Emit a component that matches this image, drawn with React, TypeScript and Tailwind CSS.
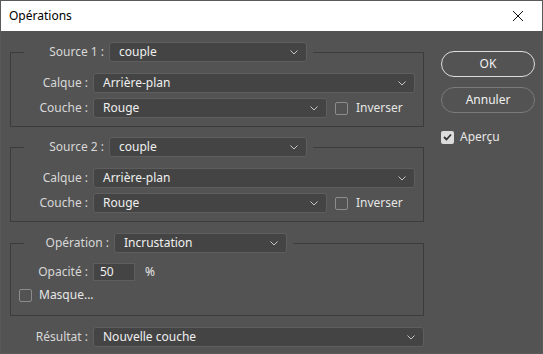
import type { ReactNode } from 'react';

const font = { fontFamily: '"Noto Sans", "Open Sans", sans-serif' };

function Chevron() {
  return (
    <svg width="8" height="5" viewBox="0 0 8 5" className="shrink-0">
      <polyline points="0.5,0.5 4,4 7.5,0.5" fill="none" stroke="#c4c4c4" strokeWidth="1" />
    </svg>
  );
}

function Select({ value, width, height = 20 }: { value: string; width: number; height?: number }) {
  return (
    <div
      className="flex items-center justify-between rounded-[3px] border border-[#5e5e5e] bg-[#444444] pl-[9px] pr-[8px] text-[12px] text-[#f0f0f0]"
      style={{ width, height }}
    >
      <span className="leading-none">{value}</span>
      <Chevron />
    </div>
  );
}

function Checkbox({ checked = false }: { checked?: boolean }) {
  if (checked) {
    return (
      <div className="flex h-[13px] w-[13px] shrink-0 items-center justify-center rounded-[2px] bg-[#dcdcdc]">
        <svg width="9" height="8" viewBox="0 0 9 8">
          <polyline points="1,4 3.5,6.5 8,1.5" fill="none" stroke="#333" strokeWidth="1.8" />
        </svg>
      </div>
    );
  }
  return <div className="h-[13px] w-[13px] shrink-0 rounded-[2px] border border-[#8c8c8c]" />;
}

function Label({ children, width = 77 }: { children: ReactNode; width?: number }) {
  return (
    <span className="shrink-0 text-right text-[12px] text-[#d8d8d8]" style={{ width }}>
      {children}
    </span>
  );
}

function Frame({ legend, children, className = '' }: { legend: ReactNode; children: ReactNode; className?: string }) {
  return (
    <fieldset className={`border border-[#3c3c3c] ${className}`}>
      <legend className="ml-[13px] px-[6px]">{legend}</legend>
      {children}
    </fieldset>
  );
}

function SourceFrame({ name, className }: { name: string; className?: string }) {
  return (
    <Frame
      className={className}
      legend={
        <div className="flex items-center gap-[5px]">
          <Label width={74}>{name} :</Label>
          <Select value="couple" width={198} />
        </div>
      }
    >
      <div className="flex flex-col gap-[5px] pb-[8px] pt-[11px]">
        <div className="flex items-center gap-[5px]">
          <Label>Calque :</Label>
          <Select value="Arrière-plan" width={322} />
        </div>
        <div className="flex items-center gap-[5px]">
          <Label>Couche :</Label>
          <Select value="Rouge" width={234} />
          <div className="ml-[3px] flex items-center gap-[8px]">
            <Checkbox />
            <span className="text-[12px] text-[#e6e6e6]">Inverser</span>
          </div>
        </div>
      </div>
    </Frame>
  );
}

export default function App() {
  return (
    <div className="h-[354px] w-[543px] border border-[#5a5a5a] bg-[#535353]" style={font}>
      <div className="flex h-[30px] items-center justify-between bg-white pl-[8px] pr-[18px]">
        <span className="text-[12px] text-black">Opérations</span>
        <svg width="12" height="12" viewBox="0 0 12 12">
          <path d="M1 1 L11 11 M11 1 L1 11" stroke="#111" strokeWidth="1" />
        </svg>
      </div>

      <div className="flex pl-[9px] pt-[11px]">
        <div className="w-[414px]">
          <SourceFrame name="Source 1" />
          <SourceFrame name="Source 2" className="mt-[10px]" />

          <Frame
            className="mt-[11px]"
            legend={
              <div className="flex items-center gap-[5px]">
                <Label width={79}>Opération :</Label>
                <Select value="Incrustation" width={173} />
              </div>
            }
          >
            <div className="flex flex-col pb-[11px] pt-[10px]">
              <div className="flex items-center gap-[5px]">
                <Label>Opacité :</Label>
                <div className="flex h-[18px] w-[42px] items-center border border-[#5e5e5e] bg-[#444444] pl-[6px] text-[12px] text-[#f0f0f0]">
                  50
                </div>
                <span className="ml-[5px] text-[12px] text-[#e6e6e6]">%</span>
              </div>
              <div className="mt-[5px] flex h-[18px] items-center gap-[7px] pl-[8px]">
                <Checkbox />
                <span className="text-[12px] text-[#e6e6e6]">Masque...</span>
              </div>
            </div>
          </Frame>

          <div className="mt-[11px] flex items-center gap-[5px]">
            <Label width={78}>Résultat :</Label>
            <Select value="Nouvelle couche" width={334} />
          </div>
        </div>

        <div className="ml-[17px] flex flex-col pt-[9px]">
          <div className="flex h-[26px] w-[94px] items-center justify-center rounded-full border border-[#dedede] text-[12px] text-[#f0f0f0]">
            OK
          </div>
          <div className="mt-[10px] flex h-[26px] w-[94px] items-center justify-center rounded-full border border-[#7a7a7a] text-[12px] text-[#f0f0f0]">
            Annuler
          </div>
          <div className="mt-[15px] flex items-center gap-[6px]">
            <Checkbox checked />
            <span className="text-[12px] text-[#e6e6e6]">Aperçu</span>
          </div>
        </div>
      </div>
    </div>
  );
}
